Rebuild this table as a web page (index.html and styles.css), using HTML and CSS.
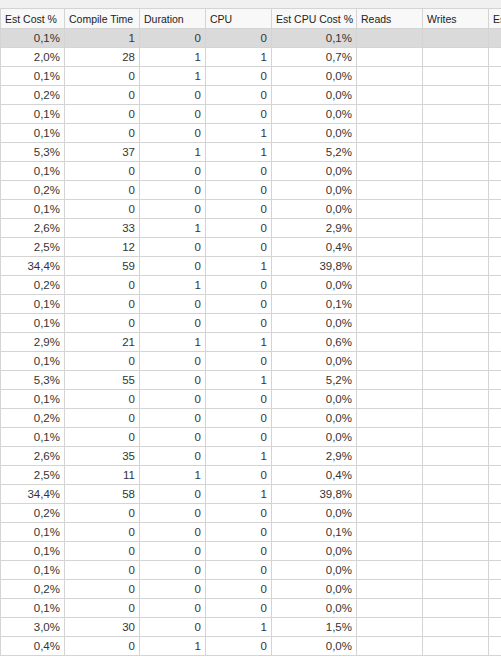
FILE: index.html
```html
<!DOCTYPE html>
<html>
<head>
<meta charset="utf-8">
<link rel="stylesheet" href="styles.css">
</head>
<body>
<div class="band"></div>
<div class="grid-wrap">
<table class="grid">
<colgroup>
<col class="c1"><col class="c2"><col class="c3"><col class="c4"><col class="c5"><col class="c6"><col class="c7"><col class="c8">
</colgroup>
<thead>
<tr><th>Est Cost %</th><th>Compile Time</th><th>Duration</th><th>CPU</th><th>Est CPU Cost %</th><th>Reads</th><th>Writes</th><th>Est I/O Cost %</th></tr>
</thead>
<tbody>
<tr class="sel"><td>0,1%</td><td>1</td><td>0</td><td>0</td><td>0,1%</td><td></td><td></td><td></td></tr>
<tr><td>2,0%</td><td>28</td><td>1</td><td>1</td><td>0,7%</td><td></td><td></td><td></td></tr>
<tr><td>0,1%</td><td>0</td><td>1</td><td>0</td><td>0,0%</td><td></td><td></td><td></td></tr>
<tr><td>0,2%</td><td>0</td><td>0</td><td>0</td><td>0,0%</td><td></td><td></td><td></td></tr>
<tr><td>0,1%</td><td>0</td><td>0</td><td>0</td><td>0,0%</td><td></td><td></td><td></td></tr>
<tr><td>0,1%</td><td>0</td><td>0</td><td>1</td><td>0,0%</td><td></td><td></td><td></td></tr>
<tr><td>5,3%</td><td>37</td><td>1</td><td>1</td><td>5,2%</td><td></td><td></td><td></td></tr>
<tr><td>0,1%</td><td>0</td><td>0</td><td>0</td><td>0,0%</td><td></td><td></td><td></td></tr>
<tr><td>0,2%</td><td>0</td><td>0</td><td>0</td><td>0,0%</td><td></td><td></td><td></td></tr>
<tr><td>0,1%</td><td>0</td><td>0</td><td>0</td><td>0,0%</td><td></td><td></td><td></td></tr>
<tr><td>2,6%</td><td>33</td><td>1</td><td>0</td><td>2,9%</td><td></td><td></td><td></td></tr>
<tr><td>2,5%</td><td>12</td><td>0</td><td>0</td><td>0,4%</td><td></td><td></td><td></td></tr>
<tr><td>34,4%</td><td>59</td><td>0</td><td>1</td><td>39,8%</td><td></td><td></td><td></td></tr>
<tr><td>0,2%</td><td>0</td><td>1</td><td>0</td><td>0,0%</td><td></td><td></td><td></td></tr>
<tr><td>0,1%</td><td>0</td><td>0</td><td>0</td><td>0,1%</td><td></td><td></td><td></td></tr>
<tr><td>0,1%</td><td>0</td><td>0</td><td>0</td><td>0,0%</td><td></td><td></td><td></td></tr>
<tr><td>2,9%</td><td>21</td><td>1</td><td>1</td><td>0,6%</td><td></td><td></td><td></td></tr>
<tr><td>0,1%</td><td>0</td><td>0</td><td>0</td><td>0,0%</td><td></td><td></td><td></td></tr>
<tr><td>5,3%</td><td>55</td><td>0</td><td>1</td><td>5,2%</td><td></td><td></td><td></td></tr>
<tr><td>0,1%</td><td>0</td><td>0</td><td>0</td><td>0,0%</td><td></td><td></td><td></td></tr>
<tr><td>0,2%</td><td>0</td><td>0</td><td>0</td><td>0,0%</td><td></td><td></td><td></td></tr>
<tr><td>0,1%</td><td>0</td><td>0</td><td>0</td><td>0,0%</td><td></td><td></td><td></td></tr>
<tr><td>2,6%</td><td>35</td><td>0</td><td>1</td><td>2,9%</td><td></td><td></td><td></td></tr>
<tr><td>2,5%</td><td>11</td><td>1</td><td>0</td><td>0,4%</td><td></td><td></td><td></td></tr>
<tr><td>34,4%</td><td>58</td><td>0</td><td>1</td><td>39,8%</td><td></td><td></td><td></td></tr>
<tr><td>0,2%</td><td>0</td><td>0</td><td>0</td><td>0,0%</td><td></td><td></td><td></td></tr>
<tr><td>0,1%</td><td>0</td><td>0</td><td>0</td><td>0,1%</td><td></td><td></td><td></td></tr>
<tr><td>0,1%</td><td>0</td><td>0</td><td>0</td><td>0,0%</td><td></td><td></td><td></td></tr>
<tr><td>0,1%</td><td>0</td><td>0</td><td>0</td><td>0,0%</td><td></td><td></td><td></td></tr>
<tr><td>0,2%</td><td>0</td><td>0</td><td>0</td><td>0,0%</td><td></td><td></td><td></td></tr>
<tr><td>0,1%</td><td>0</td><td>0</td><td>0</td><td>0,0%</td><td></td><td></td><td></td></tr>
<tr><td>3,0%</td><td>30</td><td>0</td><td>1</td><td>1,5%</td><td></td><td></td><td></td></tr>
<tr><td>0,4%</td><td>0</td><td>1</td><td>0</td><td>0,0%</td><td></td><td></td><td></td></tr>
</tbody>
</table>
</div>
</body>
</html>
```

FILE: styles.css
```css
html, body {
  margin: 0;
  padding: 0;
  background: #ffffff;
}
body {
  width: 501px;
  height: 667px;
  overflow: hidden;
  font-family: "Liberation Sans", Arial, sans-serif;
  font-size: 11px;
  color: #333333;
}
.band {
  height: 8px;
  background: #f0f0f0;
}
.grid-wrap {
  width: 501px;
  overflow: hidden;
}
.grid {
  border-collapse: collapse;
  table-layout: fixed;
  width: 600px;
  border-top: 1px solid #d4d4d4;
  border-left: 1px solid #d4d4d4;
}
.c1 { width: 64px; }
.c2 { width: 75px; }
.c3 { width: 66px; }
.c4 { width: 66px; }
.c5 { width: 85px; }
.c6 { width: 66px; }
.c7 { width: 66px; }
.c8 { width: 112px; }
.grid th {
  height: 19px;
  padding: 0 0 0 4px;
  text-align: left;
  font-weight: normal;
  font-size: 10.5px;
  color: #222222;
  background: #f8f8f8;
  border-right: 1px solid #d4d4d4;
  border-bottom: 1px solid #d4d4d4;
  white-space: nowrap;
  overflow: hidden;
  text-overflow: clip;
}
.grid td {
  height: 18px;
  padding: 0 4px 0 0;
  text-align: right;
  font-size: 11.5px;
  border-right: 1px solid #d4d4d4;
  border-bottom: 1px solid #d4d4d4;
  white-space: nowrap;
  overflow: hidden;
}
.grid tr.sel td {
  background: #dadada;
}
```
